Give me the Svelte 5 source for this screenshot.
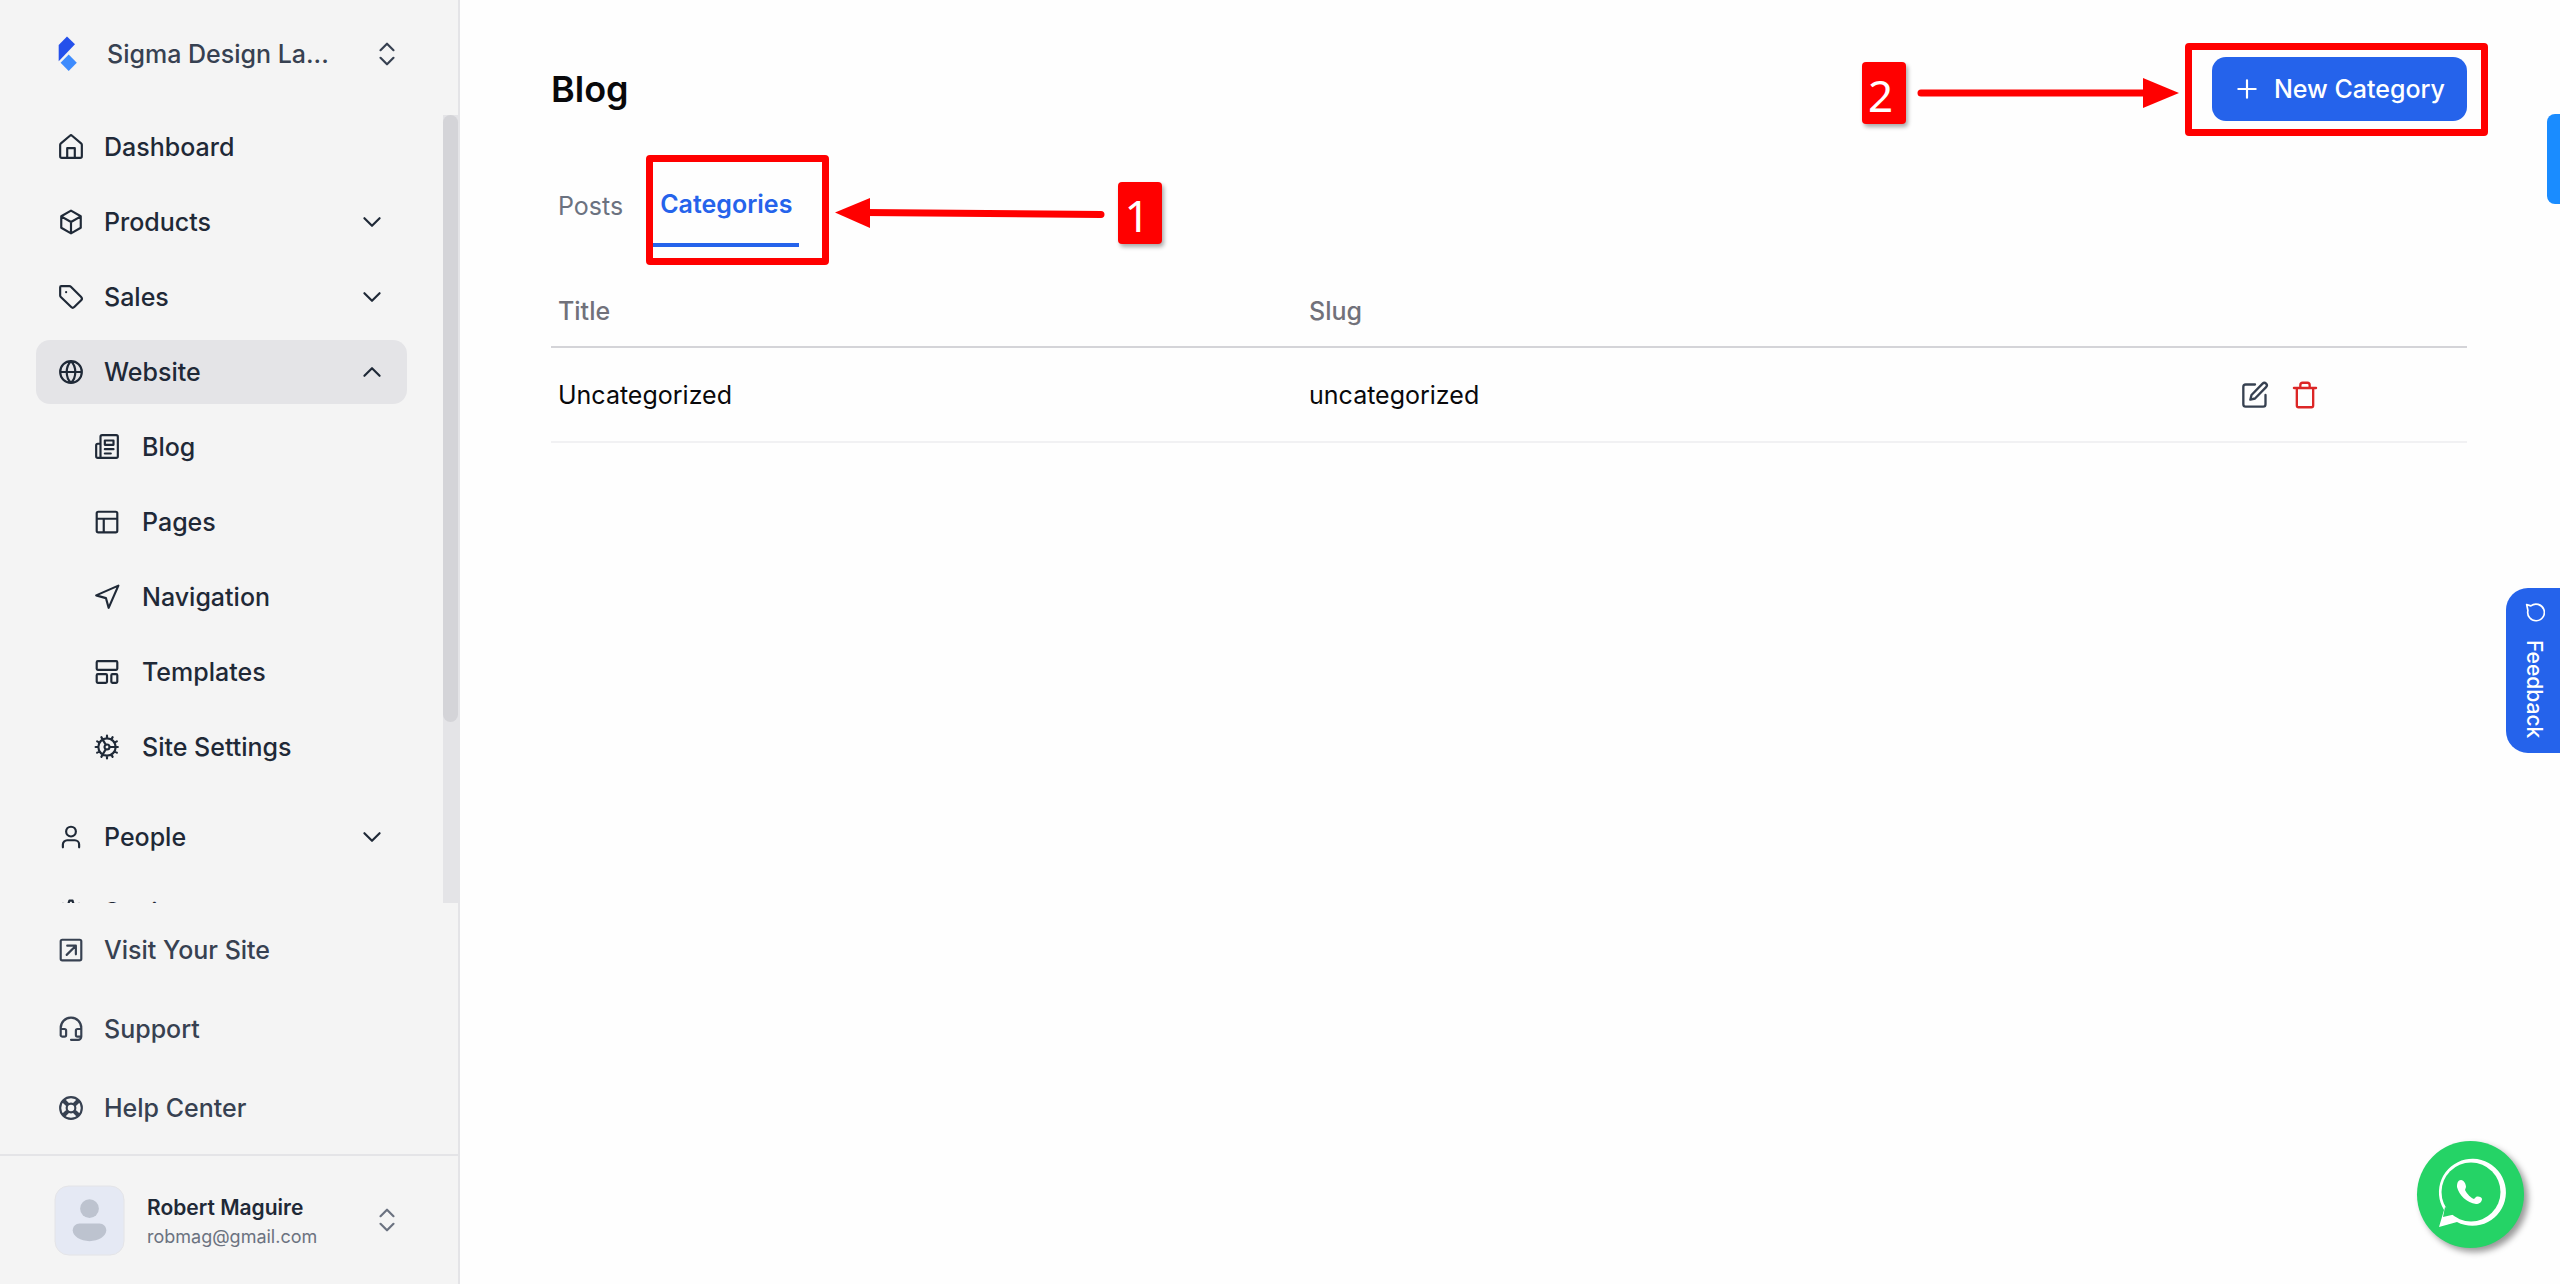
<script lang="ts">
	const icons: Record<string, string> = {
		home: 'M2 10v10.5A1.5 1.5 0 0 0 3.5 22h17a1.5 1.5 0 0 0 1.5-1.5V10a2 2 0 0 0-.7-1.4L13 1.6a1.5 1.5 0 0 0-2 0L2.7 8.600A2 2 0 0 0 2 10zM8.5 22v-9h7v9',
		box: 'M12 1.5l9 5.200v10.600L12 22.500l-9-5.200V6.700zM3.300 7L12 12l8.700-5M12 12v10',
		tag: 'M3 2h7.500a2 2 0 0 1 1.400.6l9.500 9.500a2 2 0 0 1 0 2.800l-6.400 6.400a2 2 0 0 1-2.800 0L2.600 12a2 2 0 0 1-.6-1.400V3a1 1 0 0 1 1-1zM7.500 7.400v.2',
		globe: 'M12 2a10 10 0 1 0 0 20a10 10 0 1 0 0-20M2 12h20M12 2c-5.300 5-5.300 15 0 20c5.300-5 5.300-15 0-20',
		news: 'M6 5V2.500A1.500 1.500 0 0 1 7.500 1h13A1.500 1.500 0 0 1 22 2.500v18a1.500 1.500 0 0 1-1.500 1.500h-17A1.500 1.500 0 0 1 2 20.500V10.500A1.500 1.500 0 0 1 3.500 9H6M6 5v17M10 6h8v4h-8zM10 14h8M10 18h5.500',
		layout: 'M4 2.500h16A1.500 1.500 0 0 1 21.500 4v16a1.500 1.500 0 0 1-1.500 1.500H4A1.500 1.500 0 0 1 2.500 20V4A1.500 1.500 0 0 1 4 2.500zM2.500 9h19M9 9v12.500',
		arrow: 'M2 10.500L22.500 1.500L13.500 22L11 13z',
		template: 'M3.500 2h17a1 1 0 0 1 1 1v6a1 1 0 0 1-1 1h-17a1 1 0 0 1-1-1V3a1 1 0 0 1 1-1zM3.500 14H11a1 1 0 0 1 1 1v6a1 1 0 0 1-1 1H3.500a1 1 0 0 1-1-1v-6a1 1 0 0 1 1-1zM17 14h3.500a1 1 0 0 1 1 1v6a1 1 0 0 1-1 1H17a1 1 0 0 1-1-1v-6a1 1 0 0 1 1-1z',
		gear: 'M12 4a8 8 0 1 0 0 16a8 8 0 1 0 0-16M12 9.700a2.300 2.300 0 1 0 0 4.600a2.300 2.300 0 1 0 0-4.600M14.300 12H22M10.900 10L7.500 4.200M10.900 14l-3.400 5.800M12 4V1.500M12 22.500V20M4 12H1.500M16 5.100l1.200-2.200M18.900 8l2.200-1.200M18.900 16l2.200 1.200M16 18.900l1.200 2.200M8 18.900l-1.200 2.200M5.100 16l-2.200 1.200M5.100 8L2.900 6.800M8 5.100L6.800 2.900',
		user: 'M12 2.500a4.500 4.500 0 1 0 0 9a4.500 4.500 0 1 0 0-9M4.500 21.500V19a4 4 0 0 1 4-4h7a4 4 0 0 1 4 4v2.500',
		cog: 'M12 8.500a3.500 3.500 0 1 0 0 7a3.500 3.500 0 1 0 0-7M10 3l.5-1.500h3L14 4l3 1.500 2.500-1L21.500 8l-2 2v4l2 2-2 3.500-2.500-1L14 20l-.5 2.500h-3L10 20l-3-1.500-2.500 1L2.500 16l2-2v-4l-2-2 2-3.500 2.500 1L10 4z',
		external: 'M4 2.500h16A1.500 1.500 0 0 1 21.500 4v16a1.500 1.500 0 0 1-1.500 1.500H4A1.500 1.500 0 0 1 2.500 20V4A1.500 1.500 0 0 1 4 2.500zM8 16.500L16 8.500M8.500 8H16.500V16',
		headset: 'M2.500 17V11a9.500 9.500 0 0 1 19 0v8a3 3 0 0 1-3 3H12M2.500 12H6a1.500 1.500 0 0 1 1.500 1.500v4A1.500 1.500 0 0 1 6 19H4A1.500 1.500 0 0 1 2.500 17M21.500 12H18a1.500 1.500 0 0 0-1.500 1.500v4A1.500 1.500 0 0 0 18 19h3.500',
		lifebuoy: 'M12 2a10 10 0 1 0 0 20a10 10 0 1 0 0-20M12 8a4 4 0 1 0 0 8a4 4 0 1 0 0-8M4.300 5.700l4.300 4.100M5.700 4.300l4.100 4.300M19.700 5.700l-4.300 4.100M18.300 4.300l-4.100 4.300M4.300 18.300l4.300-4.100M5.700 19.700l4.100-4.300M19.700 18.300l-4.300-4.100M18.300 19.700l-4.100-4.300',
		down: 'M5 8.500l7 7 7-7',
		up: 'M5 15.500l7-7 7 7',
		updown: 'M6 8.500l6-6 6 6M6 15.500l6 6 6-6',
		plus: 'M12 4v16M4 12h16',
		edit: 'M12 3H4a2 2 0 0 0-2 2v15a2 2 0 0 0 2 2h15a2 2 0 0 0 2-2v-8M18.500 2.200a2.100 2.100 0 0 1 3 3L12 15l-4 1 1-4z',
		trash: 'M2.500 6h19M5 6v15a1.500 1.500 0 0 0 1.500 1.500h11A1.500 1.500 0 0 0 19 21V6M8 6V3.500a2 2 0 0 1 2-2h4a2 2 0 0 1 2 2V6',
		chat: 'M2 2l5 1.500A10 10 0 1 1 3.500 9z'
	};

	const menu = [
		{ name: 'Dashboard', icon: 'home' },
		{ name: 'Products', icon: 'box', arrow: 'down' },
		{ name: 'Sales', icon: 'tag', arrow: 'down' },
		{
			name: 'Website',
			icon: 'globe',
			arrow: 'up',
			children: [
				{ name: 'Blog', icon: 'news' },
				{ name: 'Pages', icon: 'layout' },
				{ name: 'Navigation', icon: 'arrow' },
				{ name: 'Templates', icon: 'template' },
				{ name: 'Site Settings', icon: 'gear' }
			]
		},
		{ name: 'People', icon: 'user', arrow: 'down' },
		{ name: 'Settings', icon: 'cog' }
	];

	const links = [
		{ name: 'Visit Your Site', icon: 'external' },
		{ name: 'Support', icon: 'headset' },
		{ name: 'Help Center', icon: 'lifebuoy' }
	];

	const rows = [{ title: 'Uncategorized', slug: 'uncategorized' }];
</script>

{#snippet icon(name: string)}
	<svg class="icon" viewBox="0 0 24 24" aria-hidden="true"><path d={icons[name]} /></svg>
{/snippet}

<div class="app">
	<aside>
		<button class="workspace">
			<svg class="logo" viewBox="19 16 19 36" aria-hidden="true">
				<path fill="#2450eb" d="M28 16.500l8 7.800-16.300 17V25z" />
				<path fill="#3d8bfd" d="M29.700 34.500l8.100 8.200-8.100 8.300-8.100-8.300z" />
			</svg>
			<span>Sigma Design La...</span>
			{@render icon('updown')}
		</button>

		<div class="scroll">
			<nav>
				{#each menu as item}
					{#if item.arrow}
						<button class="item" class:active={item.children}>
							{@render icon(item.icon)}
							<span>{item.name}</span>
							{@render icon(item.arrow)}
						</button>
					{:else}
						<a class="item" href="/">
							{@render icon(item.icon)}
							<span>{item.name}</span>
						</a>
					{/if}
					{#if item.children}
						<div class="children">
							{#each item.children as child}
								<a class="item" href="/">
									{@render icon(child.icon)}
									<span>{child.name}</span>
								</a>
							{/each}
						</div>
					{/if}
				{/each}
			</nav>
			<div class="track"><div class="thumb"></div></div>
		</div>

		<div class="links">
			{#each links as link}
				<a href="/">
					{@render icon(link.icon)}
					<span>{link.name}</span>
				</a>
			{/each}
		</div>

		<button class="user">
			<svg class="avatar" viewBox="0 0 72 72" aria-hidden="true">
				<rect x="1" y="1" width="70" height="70" rx="14" />
				<circle cx="36" cy="24" r="9.500" />
				<path d="M26 39h20c4 0 7 3 7 7c0 6-8 11-17 11s-17-5-17-11c0-4 3-7 7-7z" />
			</svg>
			<span class="who">
				<strong>Robert Maguire</strong>
				<small>robmag@gmail.com</small>
			</span>
			{@render icon('updown')}
		</button>
	</aside>

	<main>
		<header>
			<h1>Blog</h1>
			<div class="create">
				<button class="primary">
					{@render icon('plus')}
					<span>New Category</span>
				</button>
				<div class="frame"></div>
				<div class="note">
					<span class="badge">2</span>
					<svg width="262" height="32" viewBox="0 0 262 32" aria-hidden="true">
						<path class="line" d="M4 16h228" />
						<path class="head" d="M226 1l36 15-36 15z" />
					</svg>
				</div>
			</div>
		</header>

		<div class="tabs">
			<a href="/">Posts</a>
			<a class="current" href="/">
				Categories
				<span class="frame"></span>
				<span class="note">
					<svg width="272" height="32" viewBox="0 0 272 32" aria-hidden="true">
						<path class="line" d="M30 15.500l236 2" />
						<path class="head" d="M0 15.500L35 1v30z" />
					</svg>
					<span class="badge">1</span>
				</span>
			</a>
		</div>

		<table>
			<colgroup>
				<col class="col-title" />
				<col class="col-slug" />
				<col />
			</colgroup>
			<thead>
				<tr>
					<th>Title</th>
					<th>Slug</th>
					<th></th>
				</tr>
			</thead>
			<tbody>
				{#each rows as row}
					<tr>
						<td>{row.title}</td>
						<td>{row.slug}</td>
						<td>
							<div class="actions">
								<button aria-label="Edit">{@render icon('edit')}</button>
								<button class="danger" aria-label="Delete">{@render icon('trash')}</button>
							</div>
						</td>
					</tr>
				{/each}
			</tbody>
		</table>
	</main>

	<div class="edge-tab"></div>

	<button class="feedback">
		{@render icon('chat')}
		<span>Feedback</span>
	</button>

	<a class="whatsapp" href="/" aria-label="WhatsApp">
		<svg viewBox="0 0 107 107" aria-hidden="true">
			<path fill="#fff" d="M22 86l5-17A33.500 33.500 0 1 1 40 81z" />
			<circle fill="#25d366" cx="54" cy="51" r="29.500" />
			<path fill="#25d366" d="M28 66l-2 10 13-3z" />
			<path
				fill="#fff"
				d="M44 39c-3 0-4 3-4 7c2 8 10 16 19 17c3 0 6-2 6-5c0-2-4-3-6-2l-2 2c-3-1-7-5-9-9l1-3c0-3-2-7-5-7z"
			/>
		</svg>
	</a>
</div>

<style>
	:global(body) {
		background: #fefefe;
	}

	.app {
		display: flex;
		height: 100vh;
		font-family: Inter, 'Liberation Sans', sans-serif;
		font-size: 25px;
		color: #09090b;
		overflow: hidden;
	}

	button {
		padding: 0;
		border: 0;
		background: none;
		color: inherit;
		font: inherit;
		text-align: left;
		cursor: pointer;
	}

	a {
		color: inherit;
		text-decoration: none;
	}

	.icon {
		flex: none;
		width: 26px;
		height: 26px;
		fill: none;
		stroke: currentColor;
		stroke-width: 2;
		stroke-linecap: round;
		stroke-linejoin: round;
	}

	aside {
		box-sizing: border-box;
		display: flex;
		flex: none;
		flex-direction: column;
		width: 460px;
		background: #f4f4f4;
		border-right: 2px solid #e4e4e7;
		color: #1f2937;
		font-weight: 500;
	}

	.workspace {
		display: flex;
		align-items: center;
		box-sizing: border-box;
		height: 115px;
		padding: 0 58px 8px;
		color: #374151;
	}

	.workspace span {
		flex: 1;
		margin-left: 30px;
	}

	.logo {
		width: 19px;
		height: 36px;
	}

	.scroll {
		display: flex;
		flex: 1;
		min-height: 0;
	}

	nav {
		display: flex;
		flex: 1;
		flex-direction: column;
		gap: 11px;
		padding: 0 36px;
		overflow: hidden;
	}

	.item {
		display: flex;
		flex: none;
		align-items: center;
		gap: 20px;
		box-sizing: border-box;
		height: 64px;
		padding: 0 22px;
		border-radius: 14px;
	}

	.item span {
		flex: 1;
	}

	.active {
		background: #e4e4e7;
	}

	.children {
		display: flex;
		flex-direction: column;
		gap: 11px;
		margin-bottom: 15px;
		padding-left: 36px;
	}

	.children .item {
		gap: 22px;
	}

	.track {
		width: 15px;
		background: #e4e4e7;
	}

	.thumb {
		height: 77%;
		border-radius: 8px;
		background: #d4d4d8;
	}

	.links {
		padding: 7px 58px;
		color: #374151;
	}

	.links a {
		display: flex;
		align-items: center;
		gap: 20px;
		height: 79px;
	}

	.user {
		display: flex;
		align-items: center;
		box-sizing: border-box;
		height: 130px;
		padding: 0 58px 0 54px;
		border-top: 2px solid #e4e4e7;
	}

	.user > .icon {
		color: #6b7280;
	}

	.avatar {
		width: 71px;
		height: 71px;
		fill: #bdc3cf;
	}

	.avatar rect {
		fill: #e5e9f4;
		stroke: #e4e4e7;
	}

	.who {
		display: flex;
		flex: 1;
		flex-direction: column;
		margin-left: 22px;
		padding-top: 4px;
	}

	.who strong {
		font-size: 21px;
		font-weight: 600;
		line-height: 30px;
	}

	.who small {
		color: #6b7280;
		font-size: 18px;
		font-weight: 400;
		line-height: 28px;
	}

	main {
		flex: 1;
		padding: 57px 93px 0 91px;
	}

	header {
		display: flex;
		align-items: center;
		justify-content: space-between;
	}

	h1 {
		margin: 0;
		font-size: 36px;
		font-weight: 600;
		line-height: 64px;
	}

	.create {
		position: relative;
	}

	.primary {
		display: flex;
		align-items: center;
		gap: 14px;
		height: 64px;
		padding: 0 22px;
		border-radius: 14px;
		background: #2563eb;
		color: #fff;
		font-weight: 500;
	}

	.frame {
		position: absolute;
		box-sizing: border-box;
		border: 7px solid #f00;
		border-radius: 4px;
		pointer-events: none;
	}

	.create .frame {
		inset: -14px -21px -15px -27px;
	}

	.note {
		position: absolute;
		display: flex;
		align-items: center;
		gap: 11px;
	}

	.create .note {
		top: 5px;
		right: calc(100% + 33px);
	}

	.badge {
		box-sizing: border-box;
		width: 44px;
		height: 62px;
		padding-left: 6px;
		border-radius: 4px;
		background: #f00;
		box-shadow: 2px 3px 4px #0005;
		color: #fff;
		font-family: 'Noto Sans', sans-serif;
		font-size: 44px;
		font-weight: 400;
		line-height: 66px;
	}

	.line {
		fill: none;
		stroke: #f00;
		stroke-width: 7;
		stroke-linecap: round;
	}

	.head {
		fill: #f00;
	}

	.tabs {
		display: flex;
		gap: 23px;
		margin-top: 48px;
		color: #6b7280;
		line-height: 74px;
	}

	.tabs a {
		padding: 0 7px;
	}

	.tabs .current {
		position: relative;
		padding-bottom: 4px;
		border-bottom: 4px solid #2563eb;
		color: #2563eb;
		font-weight: 600;
		line-height: 70px;
	}

	.tabs .frame {
		inset: -14px -30px -22px -7px;
	}

	.tabs .note {
		top: 13px;
		left: calc(100% + 36px);
	}

	table {
		width: 100%;
		margin-top: 29px;
		border-collapse: collapse;
		table-layout: fixed;
	}

	.col-title {
		width: 39.2%;
	}

	.col-slug {
		width: 40%;
	}

	th,
	td {
		box-sizing: border-box;
		padding: 0 7px;
		text-align: left;
	}

	th {
		height: 71px;
		border-bottom: 2px solid #d4d4d8;
		color: #71717a;
		font-weight: 500;
	}

	td {
		height: 95px;
		border-bottom: 2px solid #f1f1f3;
	}

	.actions {
		display: flex;
		justify-content: center;
		gap: 22px;
		padding-left: 24px;
	}

	.actions button {
		display: flex;
		color: #374151;
	}

	.actions .icon {
		width: 28px;
		height: 28px;
	}

	.actions .danger {
		color: #dc2626;
	}

	.edge-tab {
		position: fixed;
		top: 114px;
		right: 0;
		width: 13px;
		height: 90px;
		border-radius: 8px 0 0 8px;
		background: #1a8cff;
	}

	.feedback {
		position: fixed;
		top: 588px;
		right: 0;
		display: flex;
		align-items: center;
		gap: 17px;
		box-sizing: border-box;
		height: 165px;
		width: 54px;
		padding: 15px 0 0 3px;
		border-radius: 22px 0 0 22px;
		background: #2563eb;
		color: #fff;
		font-size: 21px;
		font-weight: 500;
		writing-mode: vertical-rl;
	}

	.feedback .icon {
		width: 20px;
		height: 20px;
	}

	.whatsapp {
		position: fixed;
		right: 36px;
		bottom: 36px;
		width: 107px;
		height: 107px;
		border-radius: 50%;
		background: #25d366;
		box-shadow: 4px 4px 6px #999;
	}
</style>
